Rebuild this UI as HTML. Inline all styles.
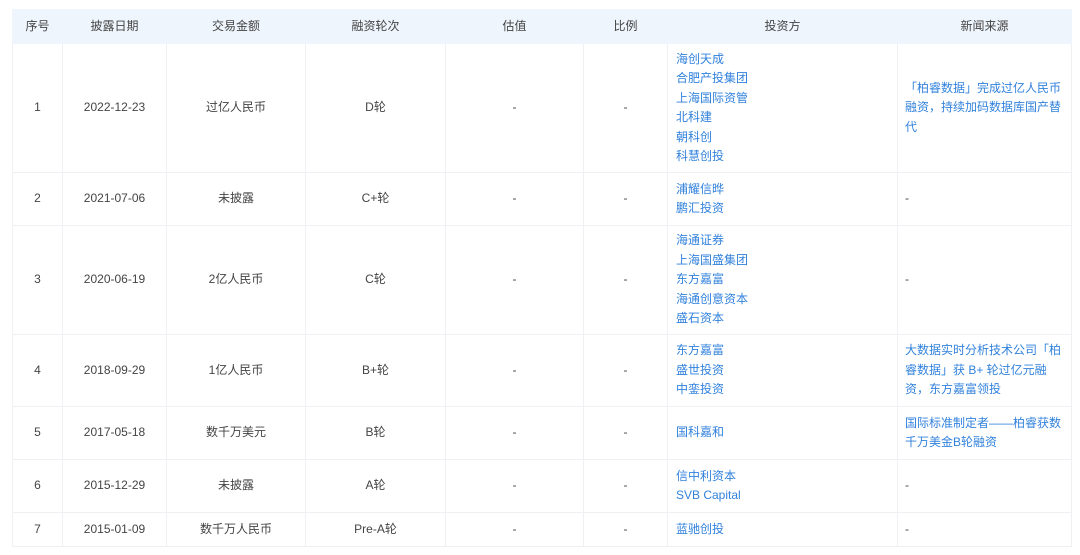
<!DOCTYPE html>
<html><head><meta charset="utf-8"><style>
body{margin:0;background:#fff;font-family:"Liberation Sans","Noto Sans CJK SC",sans-serif;font-size:12px;color:#444;}
table{position:absolute;left:12px;top:9px;border-collapse:collapse;table-layout:fixed;width:1059px;}
td,th{border:1px solid #eef0f3;text-align:center;vertical-align:middle;padding:0;line-height:19.5px;}
th{background:#eef5fc;font-weight:normal;height:33px;color:#444;border-color:#eef5fc;}
td.l{text-align:left;padding-left:8px;color:#3282dc;}
td.n{text-align:left;padding-left:7px;padding-right:6px;color:#3282dc;}
td.n.d{color:#444;}
</style></head><body>
<table>
<colgroup><col style="width:50px"><col style="width:104px"><col style="width:139px"><col style="width:140px"><col style="width:138px"><col style="width:84px"><col style="width:230px"><col style="width:174px"></colgroup>
<tr><th>序号</th><th>披露日期</th><th>交易金额</th><th>融资轮次</th><th>估值</th><th>比例</th><th>投资方</th><th>新闻来源</th></tr>
<tr style="height:129px"><td>1</td><td>2022-12-23</td><td>过亿人民币</td><td>D轮</td><td>-</td><td>-</td><td class="l">海创天成<br>合肥产投集团<br>上海国际资管<br>北科建<br>朝科创<br>科慧创投</td><td class="n">「柏睿数据」完成过亿人民币融资，持续加码数据库国产替代</td></tr>
<tr style="height:53px"><td>2</td><td>2021-07-06</td><td>未披露</td><td>C+轮</td><td>-</td><td>-</td><td class="l">浦耀信晔<br>鹏汇投资</td><td class="n d">-</td></tr>
<tr style="height:109px"><td>3</td><td>2020-06-19</td><td>2亿人民币</td><td>C轮</td><td>-</td><td>-</td><td class="l">海通证券<br>上海国盛集团<br>东方嘉富<br>海通创意资本<br>盛石资本</td><td class="n d">-</td></tr>
<tr style="height:72px"><td>4</td><td>2018-09-29</td><td>1亿人民币</td><td>B+轮</td><td>-</td><td>-</td><td class="l">东方嘉富<br>盛世投资<br>中銮投资</td><td class="n">大数据实时分析技术公司「柏睿数据」获 B+ 轮过亿元融资，东方嘉富领投</td></tr>
<tr style="height:53px"><td>5</td><td>2017-05-18</td><td>数千万美元</td><td>B轮</td><td>-</td><td>-</td><td class="l">国科嘉和</td><td class="n">国际标准制定者——柏睿获数千万美金B轮融资</td></tr>
<tr style="height:53px"><td>6</td><td>2015-12-29</td><td>未披露</td><td>A轮</td><td>-</td><td>-</td><td class="l">信中利资本<br>SVB Capital</td><td class="n d">-</td></tr>
<tr style="height:34px"><td>7</td><td>2015-01-09</td><td>数千万人民币</td><td>Pre-A轮</td><td>-</td><td>-</td><td class="l">蓝驰创投</td><td class="n d">-</td></tr>
</table>
</body></html>
